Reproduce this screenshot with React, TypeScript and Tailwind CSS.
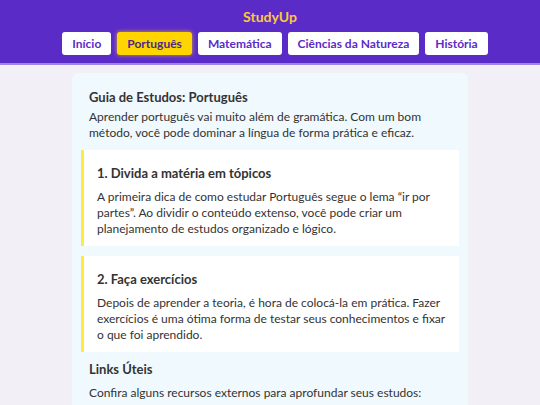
const navItems = ["Início", "Português", "Matemática", "Ciências da Natureza", "História"];

const tips = [
  {
    title: "1. Divida a matéria em tópicos",
    text: "A primeira dica de como estudar Português segue o lema “ir por partes”. Ao dividir o conteúdo extenso, você pode criar um planejamento de estudos organizado e lógico.",
  },
  {
    title: "2. Faça exercícios",
    text: "Depois de aprender a teoria, é hora de colocá-la em prática. Fazer exercícios é uma ótima forma de testar seus conhecimentos e fixar o que foi aprendido.",
  },
];

export default function App() {
  return (
    <div className="min-h-screen bg-[#f2eff7] font-['Lato',sans-serif] text-[#333]">
      <header className="bg-[#5b2bc8] border-b-2 border-[#9f86e6] pt-[8px] pb-[8px]">
        <h1 className="text-center text-[14px] font-bold leading-[18px] text-[#fcc940]">StudyUp</h1>
        <nav className="mt-[6px] flex justify-center gap-[6px] pl-[10px]">
          {navItems.map((item) => (
            <a
              key={item}
              href="#"
              className={
                item === "Português"
                  ? "flex h-[23px] items-center rounded-[3px] bg-[#ffd500] px-[10px] text-[12px] font-bold text-[#4b2a86] shadow-[0_0_4px_rgba(255,213,0,0.7)]"
                  : "flex h-[23px] items-center rounded-[3px] bg-white px-[10px] text-[12px] font-bold text-[#5b2bc8]"
              }
            >
              {item}
            </a>
          ))}
        </nav>
      </header>

      <main className="px-[72px] pt-[8px]">
        <section className="rounded-[6px] bg-[#f0f9fd] px-[17px] pt-[16px] pb-[10px]">
          <h2 className="text-[13px] font-bold leading-[16px]">Guia de Estudos: Português</h2>
          <p className="mt-[4px] text-[12px] leading-[16px]">
            Aprender português vai muito além de gramática. Com um bom método, você pode dominar a língua de forma prática e eficaz.
          </p>

          <div className="-mx-[8px] mt-[9px] flex flex-col gap-[10px]">
            {tips.map((tip) => (
              <div key={tip.title} className="border-l-[3px] border-[#ffeb3b] bg-white pt-[15px] pr-[12px] pb-[9px] pl-[13px]">
                <h3 className="text-[13px] font-bold leading-[16px]">{tip.title}</h3>
                <p className="mt-[8px] text-[12px] leading-[16px]">{tip.text}</p>
              </div>
            ))}
          </div>

          <h2 className="mt-[9px] text-[13px] font-bold leading-[16px]">Links Úteis</h2>
          <p className="mt-[8px] text-[12px] leading-[16px]">
            Confira alguns recursos externos para aprofundar seus estudos:
          </p>
        </section>
      </main>
    </div>
  );
}
